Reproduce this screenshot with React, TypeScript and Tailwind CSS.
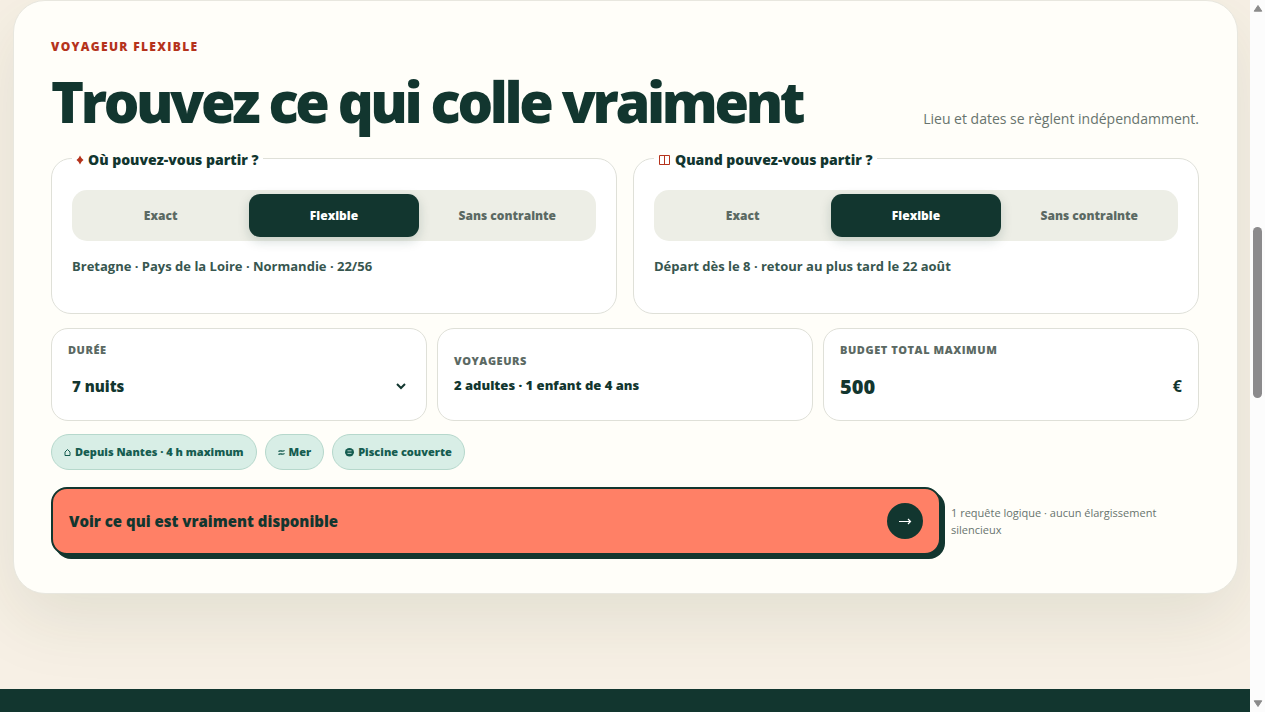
import { useState, type ReactNode } from "react";

type Mode = "exact" | "flexible" | "free";

const MODES: { id: Mode; label: string }[] = [
  { id: "exact", label: "Exact" },
  { id: "flexible", label: "Flexible" },
  { id: "free", label: "Sans contrainte" },
];

function DiamondIcon() {
  return (
    <svg width="8" height="12" viewBox="0 0 8 12" aria-hidden="true">
      <path d="M4 1.5Q5.4 4.8 7.5 6Q5.4 7.2 4 10.5Q2.6 7.2 0.5 6Q2.6 4.8 4 1.5Z" fill="#b5331c" />
    </svg>
  );
}

function SplitSquareIcon() {
  return (
    <svg width="13" height="12" viewBox="0 0 13 12" fill="none" stroke="#b5331c" aria-hidden="true">
      <path d="M1.5 1.5h10v9h-10zM6.5 1.5v9" />
    </svg>
  );
}

function HomeIcon() {
  return (
    <svg width="7" height="10" viewBox="0 0 7 10" fill="none" stroke="#155c50" aria-hidden="true">
      <path d="M1 8.5V5L3.5 2.5L6 5V8.5Z" />
    </svg>
  );
}

function WaveIcon() {
  return (
    <svg width="7" height="10" viewBox="0 0 7 10" fill="none" stroke="#155c50" strokeWidth="1.3" aria-hidden="true">
      <path d="M0.5 4.6C2 2.6 4.5 5.4 6.5 3.4M0.5 7.6C2 5.6 4.5 8.4 6.5 6.4" />
    </svg>
  );
}

function PoolIcon() {
  return (
    <svg width="9" height="10" viewBox="0 0 9 10" aria-hidden="true">
      <ellipse cx="4.5" cy="5.2" rx="4.5" ry="4.2" fill="#155c50" />
      <path d="M2.5 3.8h4M2.5 6.4h4" stroke="#d8eee6" strokeWidth="0.8" fill="none" />
    </svg>
  );
}

function ModeFieldset({
  icon,
  title,
  summary,
}: {
  icon: ReactNode;
  title: string;
  summary: string;
}) {
  const [mode, setMode] = useState<Mode>("flexible");

  return (
    <fieldset className="min-w-0 rounded-[20px] border border-[#dfe0d8] bg-white px-5 pb-[37px]">
      <legend className="flex items-center gap-1 px-1 pt-1 text-[14px] leading-5 font-extrabold text-[#12362f]">
        {icon}
        {title}
      </legend>
      <div className="mt-5 grid grid-cols-3 gap-1 rounded-[15px] bg-[#edeee6] p-1">
        {MODES.map((m) => (
          <button
            key={m.id}
            type="button"
            aria-pressed={mode === m.id}
            onClick={() => setMode(m.id)}
            className={`h-[43px] rounded-[11px] text-[12px] font-extrabold ${
              mode === m.id
                ? "bg-[#12362f] text-white shadow-[0_4px_12px_rgba(18,54,47,0.18)]"
                : "text-[#5b6963]"
            }`}
          >
            {m.label}
          </button>
        ))}
      </div>
      <p className="mt-[15px] text-[13px] leading-5 font-bold text-[#37564f]">{summary}</p>
    </fieldset>
  );
}

const CARD =
  "flex h-[93px] flex-col rounded-[17px] border border-[#dfe0d8] bg-white px-4";
const LABEL =
  "text-[11px] leading-4 font-extrabold tracking-wider text-[#5b6963] uppercase";

function Chip({ icon, label }: { icon: ReactNode; label: string }) {
  return (
    <button
      type="button"
      className="flex h-9 items-center gap-1 rounded-full border border-[#b6d8cc] bg-[#d8eee6] px-3 text-[11px] font-extrabold text-[#155c50]"
    >
      {icon}
      {label}
    </button>
  );
}

function ScrollRail() {
  return (
    <div className="flex w-[15px] shrink-0 flex-col items-center bg-[#fcfcfc]" aria-hidden="true">
      <svg width="10" height="8" viewBox="0 0 10 8" className="mt-1">
        <path d="M5 1.5L8.8 7.2H1.2Z" fill="#8b8b8b" stroke="#8b8b8b" strokeLinejoin="round" />
      </svg>
      <div className="mt-[215px] h-[171px] w-[9px] rounded-full bg-[#8b8a8c]" />
      <svg width="10" height="8" viewBox="0 0 10 8" className="mt-auto mb-1">
        <path d="M5 6.5L8.8 0.8H1.2Z" fill="#8b8b8b" stroke="#8b8b8b" strokeLinejoin="round" />
      </svg>
    </div>
  );
}

export default function App() {
  const [nights, setNights] = useState("7");
  const [budget, setBudget] = useState("500");

  return (
    <div className="flex h-screen overflow-hidden bg-[#f7f0e5] font-['Open_Sans','Noto_Sans',sans-serif] text-[#12362f]">
      <main className="flex min-w-0 flex-1 flex-col overflow-hidden">
        <section className="mr-3 ml-[13px] rounded-[32px] border border-[#e8e7df] bg-[#fffef9] pt-9 pr-[38px] pb-[38px] pl-[37px] shadow-[0_24px_70px_rgba(35,65,30,0.1)]">
          {/* Heading */}
          <p className="text-[12px] leading-5 font-extrabold tracking-[0.11em] text-[#b5331c] uppercase">
            Voyageur flexible
          </p>
          <div className="mt-4 flex items-end justify-between gap-6">
            <h2 className="pb-1 text-[56px] leading-[56px] font-extrabold tracking-[-0.06em]">
              Trouvez ce qui colle vraiment
            </h2>
            <p className="shrink-0 pb-1 text-[14px] leading-5 text-[#68746e]">
              Lieu et dates se règlent indépendamment.
            </p>
          </div>

          {/* Search form */}
          <form onSubmit={(e) => e.preventDefault()}>
            <div className="mt-[13px] grid grid-cols-2 gap-4">
              <ModeFieldset
                icon={<DiamondIcon />}
                title="Où pouvez-vous partir ?"
                summary="Bretagne · Pays de la Loire · Normandie · 22/56"
              />
              <ModeFieldset
                icon={<SplitSquareIcon />}
                title="Quand pouvez-vous partir ?"
                summary="Départ dès le 8 · retour au plus tard le 22 août"
              />
            </div>

            <div className="mt-[14px] grid grid-cols-3 gap-[10px]">
              <div className={`${CARD} pt-[13px]`}>
                <label htmlFor="nights" className={LABEL}>
                  Durée
                </label>
                <div className="mt-2 flex items-center">
                  <select
                    id="nights"
                    value={nights}
                    onChange={(e) => setNights(e.target.value)}
                    className="h-10 min-w-0 flex-1 appearance-none bg-transparent px-1 text-[15px] font-extrabold outline-none"
                  >
                    <option value="7">7 nuits</option>
                    <option value="14">14 nuits</option>
                  </select>
                  <svg
                    width="10"
                    height="8"
                    viewBox="0 0 10 8"
                    fill="none"
                    stroke="#12362f"
                    strokeWidth="2"
                    className="pointer-events-none mr-1"
                    aria-hidden="true"
                  >
                    <path d="M1 2L5 6L9 2" />
                  </svg>
                </div>
              </div>
              <div className={`${CARD} justify-center gap-1`}>
                <span className={LABEL}>Voyageurs</span>
                <strong className="text-[13px] leading-6 font-extrabold">
                  2 adultes · 1 enfant de 4 ans
                </strong>
              </div>
              <div className={`${CARD} pt-[13px]`}>
                <label htmlFor="budget" className={LABEL}>
                  Budget total maximum
                </label>
                <div className="mt-2 flex items-center">
                  <input
                    id="budget"
                    inputMode="numeric"
                    value={budget}
                    onChange={(e) => setBudget(e.target.value)}
                    className="h-10 min-w-0 flex-1 bg-transparent text-[20px] font-extrabold outline-none"
                  />
                  <b className="text-[16px]">€</b>
                </div>
              </div>
            </div>

            <div className="mt-[13px] flex flex-wrap gap-2">
              <Chip icon={<HomeIcon />} label="Depuis Nantes · 4 h maximum" />
              <Chip icon={<WaveIcon />} label="Mer" />
              <Chip icon={<PoolIcon />} label="Piscine couverte" />
            </div>

            <div className="mt-[17px] grid grid-cols-[1fr_248px] items-center gap-[10px]">
              <button
                type="submit"
                className="flex h-[68px] items-center justify-between rounded-[16px] border-2 border-[#12362f] bg-[#ff8066] px-4 text-[15px] font-extrabold shadow-[4px_4px_0_#12362f]"
              >
                Voir ce qui est vraiment disponible
                <span className="grid size-9 place-items-center rounded-full bg-[#12362f]">
                  <svg width="14" height="10" viewBox="0 0 14 10" fill="none" stroke="#fff" strokeWidth="1.2" aria-hidden="true">
                    <path d="M1 5.5h11.5M10 3l2.5 2.5L10 8" />
                  </svg>
                </span>
              </button>
              <p className="text-[11px] leading-[17px] text-[#68746e]">
                1 requête logique · aucun élargissement silencieux
              </p>
            </div>
          </form>
        </section>
        <footer className="relative mt-[95px] flex-1 bg-[#12362f]" />
      </main>
      <ScrollRail />
    </div>
  );
}
